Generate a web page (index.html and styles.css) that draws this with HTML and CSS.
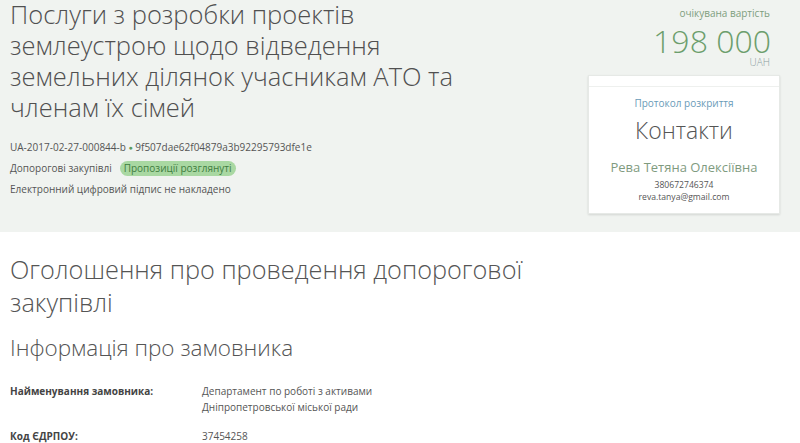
FILE: index.html
```html
<!DOCTYPE html>
<html lang="uk">
<head>
<meta charset="utf-8">
<link rel="stylesheet" href="styles.css">
</head>
<body>
<header class="head">
  <div class="head-main">
    <h1 class="title">Послуги з розробки проектів землеустрою щодо відведення земельних ділянок учасникам АТО та членам їх сімей</h1>
    <div class="meta">UA-2017-02-27-000844-b <span class="dot">●</span> 9f507dae62f04879a3b92295793dfe1e</div>
    <div class="meta row">Допорогові закупівлі <span class="badge">Пропозиції розглянуті</span></div>
    <div class="meta">Електронний цифровий підпис не накладено</div>
  </div>
  <aside class="head-side">
    <div class="price-label">очікувана вартість</div>
    <div class="price">198 000</div>
    <div class="currency">UAH</div>
    <div class="card">
      <div class="card-top"></div>
      <a class="protocol">Протокол розкриття</a>
      <div class="card-title">Контакти</div>
      <div class="person">Рева Тетяна Олексіївна</div>
      <div class="contact">380672746374</div>
      <div class="contact">reva.tanya@gmail.com</div>
    </div>
  </aside>
</header>
<main class="content">
  <h2 class="section-title">Оголошення про проведення допорогової закупівлі</h2>
  <h3 class="sub-title">Інформація про замовника</h3>
  <div class="info">
    <div class="label">Найменування замовника:</div>
    <div class="value">Департамент по роботі з активами<br>Дніпропетровської міської ради</div>
    <div class="label">Код ЄДРПОУ:</div>
    <div class="value">37454258</div>
  </div>
</main>
</body>
</html>
```

FILE: styles.css
```css
html, body {
  margin: 0;
  padding: 0;
  background: #ffffff;
  font-family: "Open Sans", "Noto Sans", sans-serif;
  color: #555555;
}

.head {
  background: #f0f3f0;
  display: flex;
  justify-content: space-between;
  height: 232px;
  box-sizing: border-box;
  padding: 0 20px 0 10px;
}

.head-main {
  width: 480px;
}

.title {
  margin: -1px 0 0 0;
  font-size: 25.5px;
  line-height: 31px;
  font-weight: 300;
  color: #505050;
}

.title + .meta {
  margin-top: 14px;
}

.meta {
  font-size: 10px;
  line-height: 21px;
  color: #555555;
}

.dot {
  color: #5c9a5c;
  font-size: 7px;
  vertical-align: 1px;
}

.row {
  display: flex;
  align-items: center;
  gap: 8px;
}

.badge {
  background: #a9d8a2;
  color: #3f7d3f;
  border-radius: 8px;
  padding: 0 4px;
  line-height: 15px;
  font-size: 10px;
}

.head-side {
  width: 192px;
  display: flex;
  flex-direction: column;
  align-items: stretch;
}

.price-label {
  margin-top: 6px;
  text-align: right;
  padding-right: 10px;
  font-size: 10px;
  line-height: 14px;
  color: #7e9e7e;
}

.price {
  margin-top: 5px;
  text-align: right;
  padding-right: 9px;
  font-size: 32px;
  font-weight: 300;
  line-height: 31px;
  color: #6c9e6c;
}

.currency {
  margin-top: 1px;
  text-align: right;
  padding-right: 10px;
  font-size: 10px;
  font-weight: 300;
  line-height: 11px;
  color: #8aa0a0;
}

.card {
  margin-top: 7px;
  background: #ffffff;
  height: 139px;
  box-sizing: border-box;
  box-shadow: 0 1px 2px rgba(0, 0, 0, 0.12);
  border: 1px solid #e6e9e6;
  display: flex;
  flex-direction: column;
  align-items: center;
}

.card-top {
  align-self: stretch;
  height: 10px;
  border-bottom: 1px solid #eef0ee;
}

.protocol {
  margin-top: 9px;
  font-size: 10px;
  line-height: 14px;
  color: #6a9bb8;
}

.card-title {
  margin-top: 5px;
  font-size: 23px;
  line-height: 30px;
  font-weight: 300;
  color: #555555;
}

.person {
  margin-top: 13px;
  font-size: 13px;
  line-height: 18px;
  color: #7f9b7f;
}

.contact {
  font-size: 8.6px;
  line-height: 12px;
  color: #555555;
}

.person + .contact {
  margin-top: 3px;
}

.content {
  padding: 0 10px;
}

.section-title {
  margin: 21px 0 0 0;
  font-size: 25.3px;
  line-height: 33px;
  font-weight: 300;
  color: #555555;
  width: 580px;
}

.sub-title {
  margin: 13px 0 0 0;
  font-size: 22.5px;
  line-height: 32px;
  font-weight: 300;
  color: #555555;
}

.info {
  margin-top: 19px;
  display: grid;
  grid-template-columns: 192px 1fr;
  row-gap: 13px;
  font-size: 10px;
  line-height: 16px;
}

.label {
  font-weight: 700;
  color: #444444;
}

.value {
  color: #555555;
}
```
